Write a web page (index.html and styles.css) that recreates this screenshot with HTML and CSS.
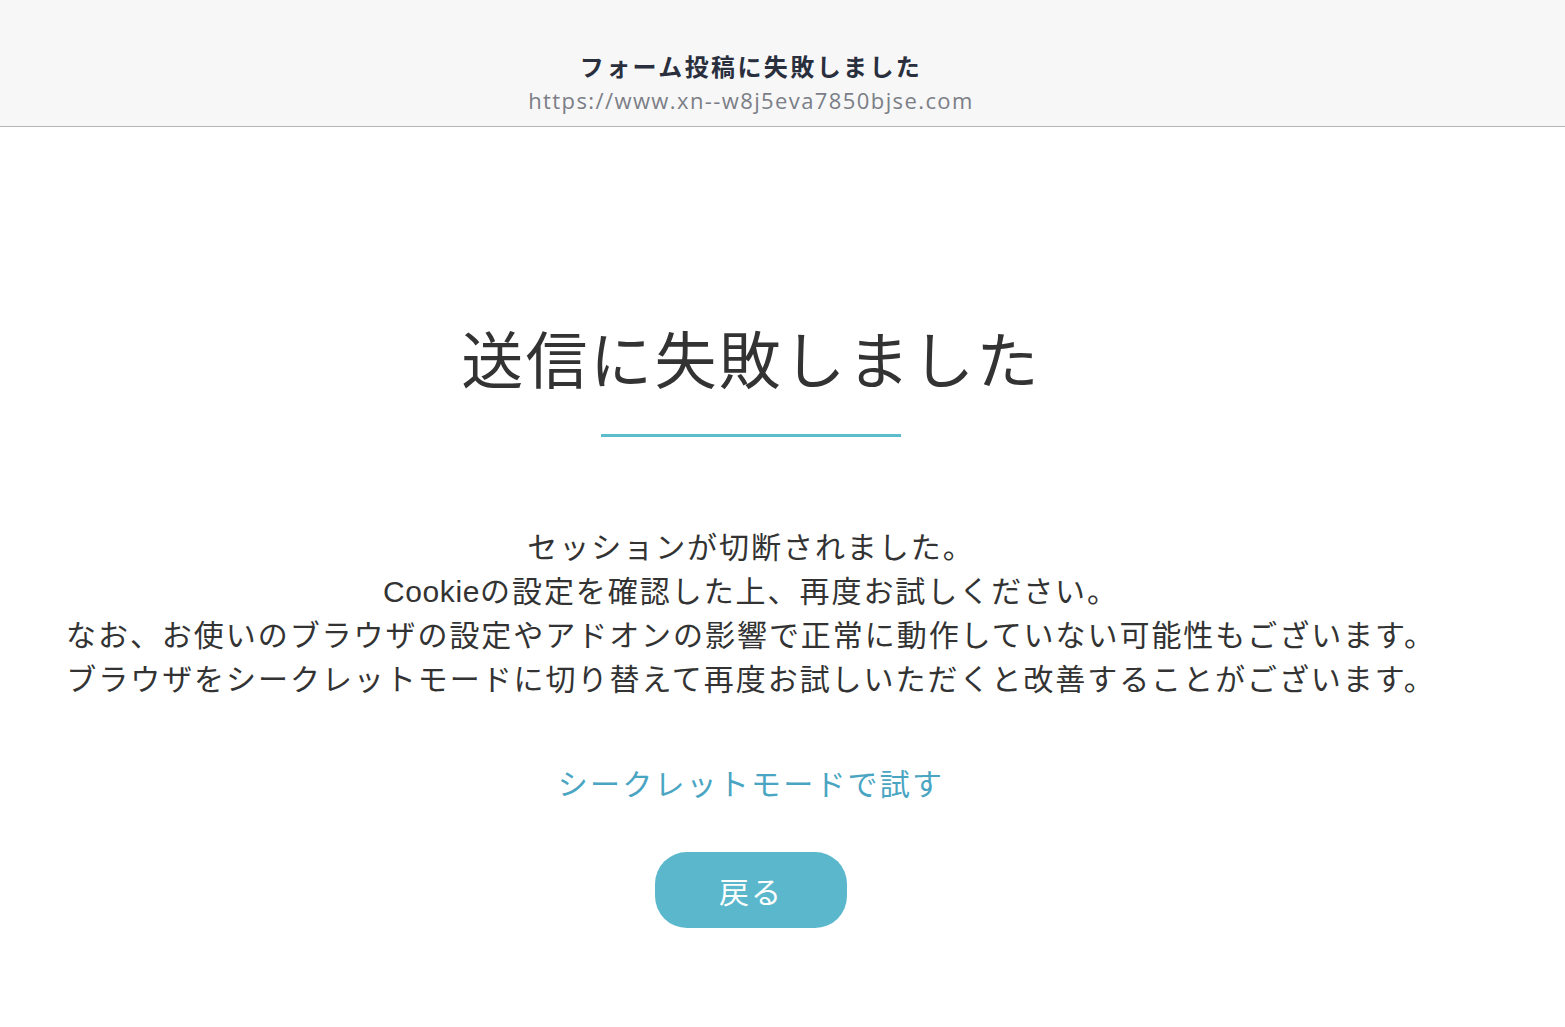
FILE: index.html
```html
<!DOCTYPE html>
<html lang="ja">
<head>
    <meta charset="UTF-8">
    <meta name="viewport" content="width=device-width, initial-scale=1.0">
    <title>フォーム投稿に失敗しました</title>
    <link rel="stylesheet" href="styles.css">
</head>
<body>
    <div class="cabecalho">
        <div class="titulo">フォーム投稿に失敗しました</div>
        <div class="endereco">https://www.xn--w8j5eva7850bjse.com</div>
    </div>

    <div class="conteudo">
        <h1 class="erro">送信に失敗しました</h1>
        <div class="linha"></div>

        <p class="mensagem">
            セッションが切断されました。<br>
            <span class="latino">Cookie</span>の設定を確認した上、再度お試しください。<br>
            なお、お使いのブラウザの設定やアドオンの影響で正常に動作していない可能性もございます。<br>
            ブラウザをシークレットモードに切り替えて再度お試しいただくと改善することがございます。
        </p>

        <a class="secreto" href="#">シークレットモードで試す</a>

        <button class="voltar">戻る</button>
    </div>
</body>
</html>
```

FILE: styles.css
```css
body {
  margin: 0;
  background: white;
  font-family: "Liberation Sans", "Noto Sans CJK JP", sans-serif;
  color: #333;
}

.cabecalho {
  height: 127px;
  box-sizing: border-box;
  padding: 51px 63px 0 0;
  background: #f7f7f8;
  border-bottom: 1px solid #b5b5b8;
  text-align: center;
}

.titulo {
  font-size: 24px;
  font-weight: bold;
  line-height: 34px;
  color: #2a2f3d;
  letter-spacing: 2.4px;
}

.endereco {
  font-family: "Open Sans", "Noto Sans CJK JP", sans-serif;
  font-size: 22px;
  line-height: 30px;
  color: #7b7e86;
  letter-spacing: 1.4px;
}

.conteudo {
  display: flex;
  flex-direction: column;
  align-items: center;
  text-align: center;
  padding-right: 63px;
}

.erro {
  margin: 197px 0 0;
  font-size: 62px;
  font-weight: normal;
  line-height: 77px;
  letter-spacing: 2.4px;
}

.linha {
  width: 300px;
  height: 3px;
  margin-top: 33px;
  background: #5bbccc;
}

.mensagem {
  margin: 89px 0 0;
  font-size: 30px;
  line-height: 44px;
  letter-spacing: 1.95px;
}

.latino {
  letter-spacing: 0.6px;
}

.secreto {
  margin-top: 61px;
  font-size: 30px;
  line-height: 44px;
  letter-spacing: 2.2px;
  color: #4aa5c2;
  text-decoration: none;
}

.voltar {
  margin-top: 45px;
  width: 192px;
  height: 76px;
  border: none;
  border-radius: 32px;
  background: #5bb8cc;
  color: white;
  font-family: "Noto Sans CJK JP", sans-serif;
  font-size: 30px;
  letter-spacing: 2px;
}
```
